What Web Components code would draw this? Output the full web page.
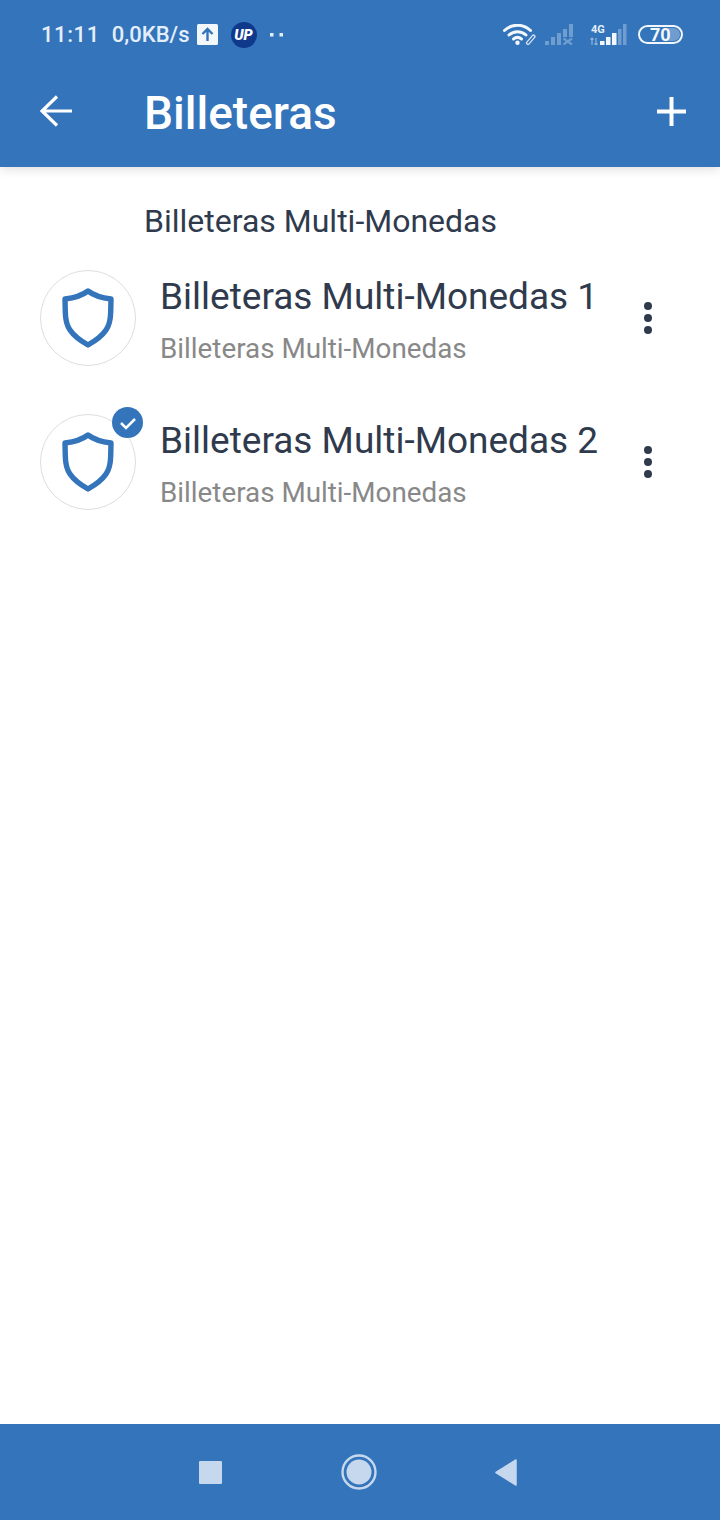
<!DOCTYPE html>
<html>
<head>
<meta charset="utf-8">
<style>
  html, body { margin: 0; height: 100%; }
  body { font-family: Roboto, "Noto Sans", sans-serif; background: #fff; }
</style>
</head>
<body>
<wallet-app></wallet-app>

<template id="status-bar-tpl">
  <style>
    :host { display: flex; align-items: center; height: 68px; padding: 1px 37px 0 41px; box-sizing: border-box; color: #e3eefa; }
    .left, .right { display: flex; align-items: center; }
    .right { margin-left: auto; }
    .time { font-size: 22px; font-weight: 500; letter-spacing: 0.6px; }
    .speed { font-size: 22px; font-weight: 500; margin-left: 12px; }
    svg { display: block; }
    .up { margin-left: 8px; }
    .logo { margin-left: 13px; }
    .dots { margin-left: 13px; }
    .sig-off { margin-left: 9px; }
    .sig-on { margin-left: 17px; }
    .batt { margin-left: 11px; }
  </style>
  <div class="left">
    <span class="time">11:11</span>
    <span class="speed">0,0KB/s</span>
    <svg class="up" width="21" height="21" viewBox="0 0 21 21"><rect width="21" height="21" rx="1.5" fill="#f2f7fc"/><path d="M10.5 17V5.500M5.500 10l5-5 5 5" fill="none" stroke="#3474ba" stroke-width="2.400"/></svg>
    <svg class="logo" width="26" height="26" viewBox="0 0 26 26"><circle cx="13" cy="13" r="13" fill="#0f3a8c"/><text x="12.500" y="18" text-anchor="middle" font-family="Roboto" font-size="14.500" font-weight="900" font-style="italic" fill="#fff">UP</text></svg>
    <svg class="dots" width="13" height="4" viewBox="0 0 13 4"><rect width="3.500" height="3.500" fill="#e3eefa"/><rect x="9.500" width="3.500" height="3.500" fill="#e3eefa"/></svg>
  </div>
  <div class="right">
    <!-- wifi arcs with the small link mark -->
    <svg width="33" height="21" viewBox="0 0 33 21" fill="none" stroke="#f2f7fc" stroke-linecap="round" stroke-width="3">
      <path d="M1.500 6.500C9-.5 20-.5 27.500 6.500"/><path d="M6 11c5-4.500 12-4.500 17 0"/><path d="M10.500 15c2.500-2 5.500-2 8 0"/>
      <circle cx="14.500" cy="18.800" r="2.200" fill="#f2f7fc" stroke="none"/>
      <path d="M25 19l5.500-6.500" stroke="#d5e3f3" stroke-width="4.200"/><path d="M25 19l5.500-6.500" stroke="#3474ba" stroke-width="1.600"/>
    </svg>
    <svg class="sig-off" width="28" height="21" viewBox="0 0 28 21" fill="#6f9dd0">
      <rect x="0" y="17" width="4" height="4"/><rect x="6" y="13" width="4" height="8"/><rect x="12" y="9" width="4" height="12"/><rect x="18" y="5" width="4" height="8"/><rect x="24" y="0" width="4" height="13"/>
      <path d="M18.500 14.500l8.500 6M27 14.500l-8.500 6" stroke="#6f9dd0" stroke-width="2.200" fill="none"/>
    </svg>
    <svg class="sig-on" width="37" height="21" viewBox="0 0 37 21">
      <text x="1" y="8.500" font-family="Roboto" font-size="11" font-weight="700" fill="#e3eefa">4G</text>
      <path d="M2 21v-7M0.500 15.500L2 14l1.500 1.500M6 14v7M4.500 19.500L6 21l1.500-1.500" stroke="#8fb5dc" stroke-width="1.200" fill="none"/>
      <rect x="10" y="17" width="4.500" height="4" fill="#f2f7fc"/><rect x="16" y="13" width="4.500" height="8" fill="#f2f7fc"/><rect x="22" y="9" width="4.500" height="12" fill="#f2f7fc"/><rect x="28" y="5" width="3.500" height="16" fill="#6f9dd0"/><rect x="33" y="0" width="3.500" height="21" fill="#6f9dd0"/>
    </svg>
    <div class="batt"><battery-pill level="70"></battery-pill></div>
  </div>
</template>

<template id="battery-pill-tpl">
  <style>
    :host { display: block; }
    .pill { position: relative; width: 41px; height: 15px; border: 2.500px solid #f2f7fc; border-radius: 11px; display: flex; align-items: center; font-size: 18px; font-weight: 700; color: #f2f7fc; line-height: 15px; }
    .rest { position: absolute; right: 1px; top: 1px; bottom: 1px; width: 12px; background: #6f9dd0; border-radius: 0 7px 7px 0; }
    span { position: relative; margin-left: 10px; }
  </style>
  <div class="pill"><div class="rest"></div><span></span></div>
</template>

<template id="app-toolbar-tpl">
  <style>
    :host { display: flex; align-items: center; height: 99px; padding: 0 34px 0 40px; box-sizing: border-box; color: #fff; }
    svg { display: block; }
    h1 { margin: 0 0 10px 72px; font-size: 46px; font-weight: 500; line-height: 50px; flex: 1; }
    .back, .add { margin-bottom: 13px; }
  </style>
  <svg class="back" width="32" height="32" viewBox="0 0 32 32" fill="none" stroke="#fff" stroke-width="3.200"><path d="M32 16H3M17 1.500L2 16l15 14.500"/></svg>
  <h1><slot></slot></h1>
  <svg class="add" width="29" height="29" viewBox="0 0 29 29" fill="none" stroke="#fff" stroke-width="4"><path d="M14.500 0v29M0 14.500h29"/></svg>
</template>

<template id="wallet-row-tpl">
  <style>
    :host { display: flex; align-items: center; height: 144px; padding: 0 0 0 40px; box-sizing: border-box; }
    .avatar { position: relative; width: 96px; height: 96px; flex: none; box-sizing: border-box; border: 1px solid #dedede; border-radius: 50%; display: flex; align-items: center; justify-content: center; }
    .badge { position: absolute; top: -8px; right: -8px; width: 31px; height: 31px; border-radius: 50%; background: #3474ba; display: none; align-items: center; justify-content: center; }
    :host([selected]) .badge { display: flex; }
    .text { margin-left: 25px; flex: 1; margin-top: 4px; }
    .name { font-size: 37px; line-height: 44px; color: #2f3a4d; white-space: nowrap; margin-left: -1px; }
    .sub { font-size: 27.800px; line-height: 32px; color: #888; margin-top: 14px; white-space: nowrap; margin-left: -1px; }
    .more { display: flex; flex-direction: column; gap: 4px; margin-right: 68px; }
    .more i { width: 8px; height: 8px; border-radius: 50%; background: #2f3a4d; display: block; }
    svg { display: block; }
  </style>
  <div class="avatar">
    <svg width="52" height="60" viewBox="0 0 52 60" fill="none" stroke="#3474ba" stroke-width="5.400" stroke-linejoin="round"><path d="M26 3C20 7.500 12 10 3 11L3.300 24C3.500 32 5 38 8 42C12 48 19 53 26 57C33 53 40 48 44 42C47 38 48.500 32 48.700 24L49 11C40 10 32 7.500 26 3Z"/></svg>
    <div class="badge"><svg width="18" height="14" viewBox="0 0 18 14" fill="none" stroke="#fff" stroke-width="2.500"><path d="M2 7l5 5 9-9"/></svg></div>
  </div>
  <div class="text">
    <div class="name"><slot name="name"></slot></div>
    <div class="sub"><slot name="sub"></slot></div>
  </div>
  <div class="more"><i></i><i></i><i></i></div>
</template>

<template id="nav-bar-tpl">
  <style>
    :host { display: flex; align-items: center; height: 96px; background: #3474ba; padding-left: 199px; box-sizing: border-box; }
    svg { display: block; }
    .home { margin: 0 118px 0 119px; }
  </style>
  <svg width="23" height="23" viewBox="0 0 23 23"><rect width="23" height="23" rx="1" fill="#c5d8ed"/></svg>
  <svg class="home" width="36" height="36" viewBox="0 0 36 36"><circle cx="18" cy="18" r="16.500" fill="none" stroke="#c5d8ed" stroke-width="2.400"/><circle cx="18" cy="18" r="12.500" fill="#c5d8ed"/></svg>
  <svg width="22" height="27" viewBox="0 0 22 27"><path d="M21 1L1 13.500 21 26z" fill="#c5d8ed" stroke="#c5d8ed" stroke-linejoin="round" stroke-width="1.500"/></svg>
</template>

<template id="wallet-app-tpl">
  <style>
    :host { display: flex; flex-direction: column; height: 1520px; }
    header { background: #3474ba; position: relative; box-shadow: 0 2px 10px rgba(0,0,0,.14); }
    main { flex: 1; padding-top: 36px; }
    .section { margin: 0 0 7px 144px; font-size: 32px; line-height: 36px; color: #2f3a4d; }
  </style>
  <header>
    <status-bar></status-bar>
    <app-toolbar>Billeteras</app-toolbar>
  </header>
  <main>
    <div class="section">Billeteras Multi-Monedas</div>
    <wallet-row>
      <span slot="name">Billeteras Multi-Monedas 1</span>
      <span slot="sub">Billeteras Multi-Monedas</span>
    </wallet-row>
    <wallet-row selected>
      <span slot="name">Billeteras Multi-Monedas 2</span>
      <span slot="sub">Billeteras Multi-Monedas</span>
    </wallet-row>
  </main>
  <nav-bar></nav-bar>
</template>

<script>
  // every element here just stamps its template into an open shadow root
  function stamped(id) {
    return class extends HTMLElement {
      constructor() {
        super();
        this.attachShadow({ mode: "open" });
        const tpl = document.getElementById(id);
        this.shadowRoot.appendChild(tpl.content.cloneNode(true));
      }
    };
  }

  class BatteryPill extends stamped("battery-pill-tpl") {
    connectedCallback() {
      this.shadowRoot.querySelector("span").textContent = this.getAttribute("level");
    }
  }

  customElements.define("battery-pill", BatteryPill);
  customElements.define("status-bar", stamped("status-bar-tpl"));
  customElements.define("app-toolbar", stamped("app-toolbar-tpl"));
  customElements.define("wallet-row", stamped("wallet-row-tpl"));
  customElements.define("nav-bar", stamped("nav-bar-tpl"));
  customElements.define("wallet-app", stamped("wallet-app-tpl"));
</script>
</body>
</html>
